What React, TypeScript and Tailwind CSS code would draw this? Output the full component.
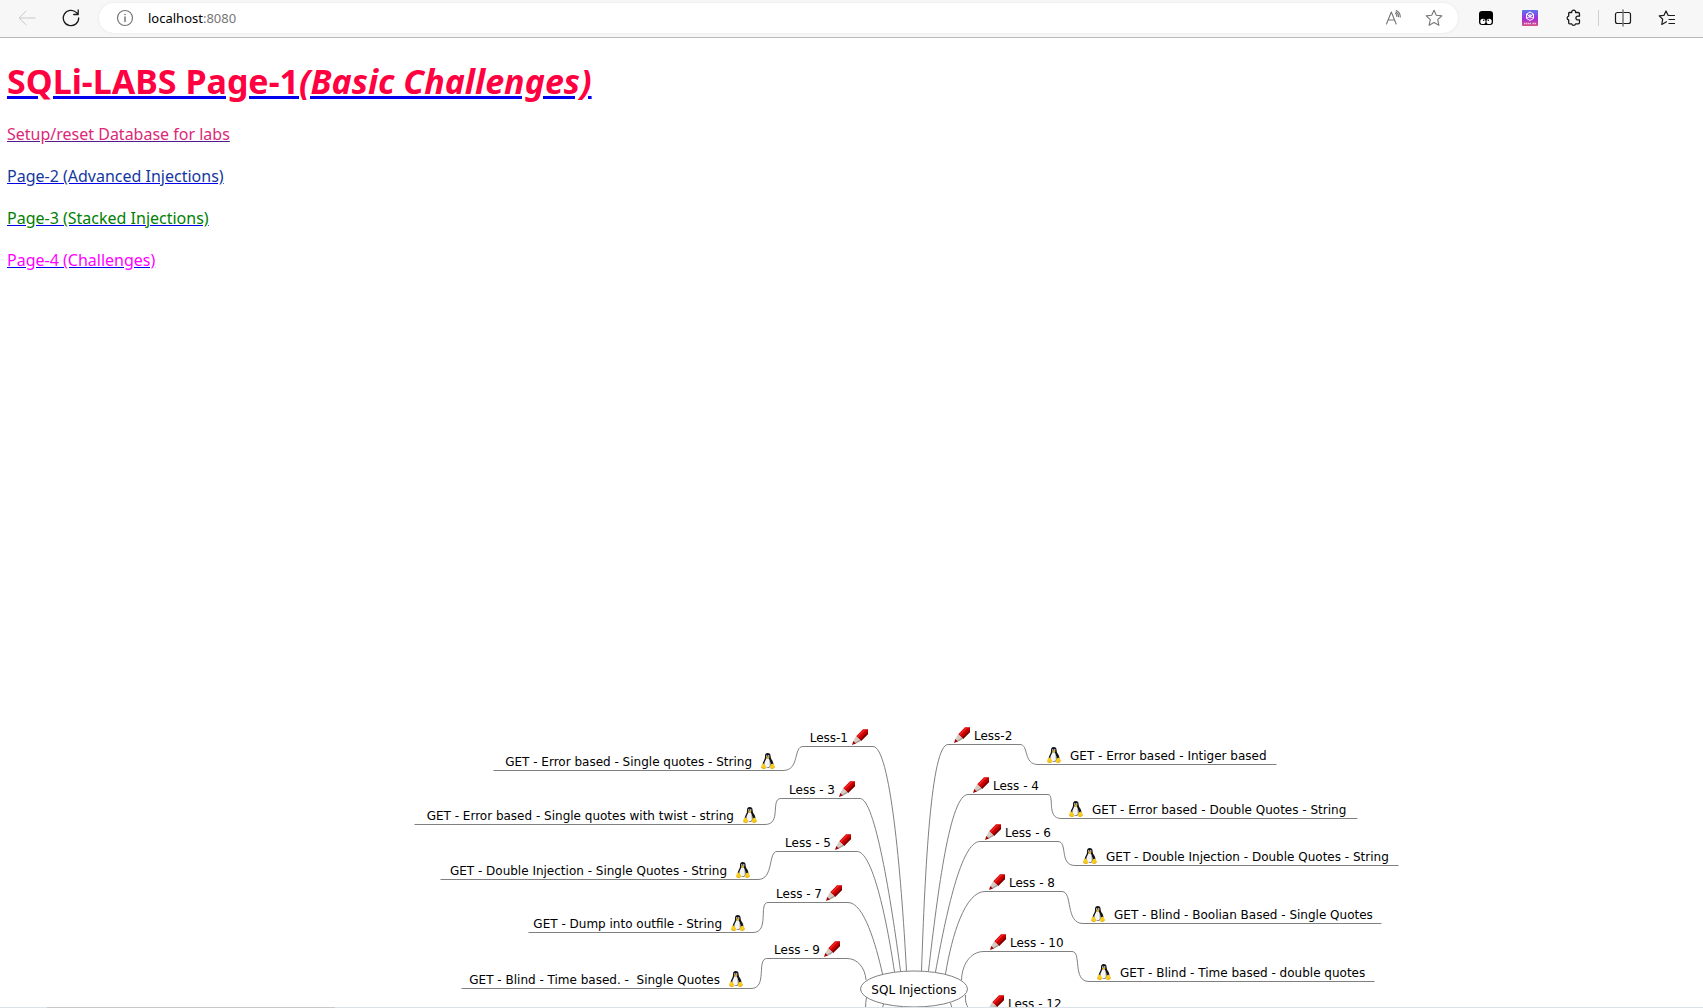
import React from "react";

const ORIGIN_X = 300;
const ORIGIN_Y = 708;

type Side = "left" | "right";

type Topic = {
  side: Side;
  icon: "pencil" | "tux";
  label: string;
  // Edge of the icon: its right edge on the left side, its left edge on the right side.
  x: number;
  // Height of the line under the topic.
  y: number;
};

const topics: Topic[] = [
  { side: "left", icon: "pencil", label: "Less-1", x: 868, y: 746 },
  { side: "left", icon: "tux", label: "GET - Error based - Single quotes - String", x: 776, y: 770 },
  { side: "left", icon: "pencil", label: "Less - 3", x: 855, y: 798 },
  { side: "left", icon: "tux", label: "GET - Error based - Single quotes with twist - string", x: 758, y: 824 },
  { side: "left", icon: "pencil", label: "Less - 5", x: 851, y: 851 },
  { side: "left", icon: "tux", label: "GET - Double Injection - Single Quotes - String", x: 751, y: 879 },
  { side: "left", icon: "pencil", label: "Less - 7", x: 842, y: 902 },
  { side: "left", icon: "tux", label: "GET - Dump into outfile - String", x: 746, y: 932 },
  { side: "left", icon: "pencil", label: "Less - 9", x: 840, y: 958 },
  { side: "left", icon: "tux", label: "GET - Blind - Time based. -  Single Quotes", x: 744, y: 988 },
  { side: "right", icon: "pencil", label: "Less-2", x: 954, y: 744 },
  { side: "right", icon: "tux", label: "GET - Error based - Intiger based", x: 1046, y: 764 },
  { side: "right", icon: "pencil", label: "Less - 4", x: 973, y: 794 },
  { side: "right", icon: "tux", label: "GET - Error based - Double Quotes - String", x: 1068, y: 818 },
  { side: "right", icon: "pencil", label: "Less - 6", x: 985, y: 841 },
  { side: "right", icon: "tux", label: "GET - Double Injection - Double Quotes - String", x: 1082, y: 865 },
  { side: "right", icon: "pencil", label: "Less - 8", x: 989, y: 891 },
  { side: "right", icon: "tux", label: "GET - Blind - Boolian Based - Single Quotes", x: 1090, y: 923 },
  { side: "right", icon: "pencil", label: "Less - 10", x: 990, y: 951 },
  { side: "right", icon: "tux", label: "GET - Blind - Time based - double quotes", x: 1096, y: 981 },
  { side: "right", icon: "pencil", label: "Less - 12", x: 988, y: 1012 },
];

const branches = [
  "M493.5 770.5H783C800 770.5 793 746.5 803 746.5H873C890 746.5 901 870 906.5 971",
  "M414.5 824.5H765C782 824.5 770 798.5 781 798.5H860C875 798.5 891 900 900.5 971",
  "M440.5 879.5H758C774 879.5 768 851.5 777 851.5H857C872 851.5 886 915 894.5 972",
  "M528.5 932.5H753C770 932.5 758 902.5 768 902.5H848C864 902.5 876 945 882.5 974",
  "M461.5 988.5H751C768 988.5 756 958.5 767 958.5H847C857 958.5 865 967 866 980",
  "M1276.5 764.5H1038C1023 764.5 1029 744.5 1020 744.5H948C931 744.5 925 870 921.5 971",
  "M1357.5 818.5H1061C1046 818.5 1055 794.5 1048 794.5H968C950 794.5 938 890 928.5 971",
  "M1398.5 865.5H1075C1059 865.5 1068 841.5 1058 841.5H980C961 841.5 946 915 935.5 972",
  "M1381.5 923.5H1083C1065 923.5 1073 891.5 1062 891.5H985C965 891.5 952 935 945.5 974",
  "M1374.5 981.5H1089C1072 981.5 1082 951.5 1072 951.5H984C970 951.5 962 965 961.5 980",
  "M866.5 997C866 1001 865.5 1004 865.5 1008",
  "M883.5 1004L882.5 1008",
  "M965.5 995C965 1000 966 1005 968.5 1008",
  "M950.5 1003L952 1008",
];

function Pencil() {
  return (
    <svg width="16" height="16" viewBox="0 0 16 16" className="shrink-0" aria-hidden="true">
      <path d="M11 0.300H16V5L9 12 4 7.500Z" fill="#cc0000" />
      <path d="M11 1 13.500 1 6.500 8.200 5 7.200Z" fill="#ee2222" />
      <path d="M16 2.500V5L9 12 7.800 10.800Z" fill="#7a0000" />
      <path d="M4.200 7 9 11.800 3 15 0.800 13Z" fill="#d6cbc2" />
      <path d="M8 10.800 9 11.800 3 15 2.200 14.200Z" fill="#a39a94" />
      <path d="M1.300 12 3.800 14.400 0 16Z" fill="#a40000" />
    </svg>
  );
}

function Tux() {
  return (
    <svg width="16" height="16" viewBox="0 0 16 16" className="shrink-0" aria-hidden="true">
      <path d="M7.700 0C5.700 0 4.900 1.400 5 3.200c.1 2-.3 3-1.300 4.700C2.700 9.600 2.500 11 2.900 12.500L8 15l5.200-2.500c.5-1.500.1-3.200-.9-4.900-.9-1.500-1.700-2.500-1.700-4.500C10.600 1.200 9.700 0 7.700 0Z" fill="#141414" />
      <path d="M6.300 5.300C6.200 7 4.300 8.500 4.300 11c0 2 1.400 3.600 3.300 3.600S10.400 13 10.400 11c0-2.500-1.300-4-1.600-5.800Z" fill="#f4f4f4" />
      <path d="M8.900 6c.8 1.500 1.700 3 1.500 5.500l-.7 2Z" fill="#bdbdbd" />
      <circle cx="6.800" cy="3" r=".8" fill="#fff" />
      <circle cx="8.700" cy="3" r=".8" fill="#fff" />
      <path d="M6 4.400 7.600 3.600l1.900.8L7.700 5.700Z" fill="#f0b90c" />
      <path d="M3 10.600c1-.1 1.700 1 2.400 2 .8 1.200 1.200 2.600 0 3.200-1.200.4-4.200-.6-4.300-1.400-.1-.8.200-1.100.5-2 .2-.9.500-1.700 1.400-1.800Z" fill="#f8cb20" />
      <path d="M12.600 10.800c.9 0 1.200.7 1.500 1.400.3.600.9.900.9 1.500 0 1-2.300 2.100-3.500 2.200-1.300 0-1.700-1.100-1.500-2.500.2-1.500 1.100-2.600 2.600-2.600Z" fill="#f8cb20" />
      <path d="M1.300 14.600c1 .7 2.500 1.100 3.800 1.100M14.700 14.300c-.9.800-2 1.300-3.200 1.400" stroke="#c68a05" strokeWidth=".5" fill="none" />
    </svg>
  );
}

function TopicLink({ topic }: { topic: Topic }) {
  const top = topic.y - 17 - ORIGIN_Y;
  const glyph = topic.icon === "pencil" ? <Pencil /> : <Tux />;
  const onLeft = topic.side === "left";
  const gap = topic.icon === "pencil" ? "gap-1" : "gap-2";
  const style = onLeft
    ? { top, right: 1403 - topic.x }
    : { top, left: topic.x - ORIGIN_X };
  return (
    <a href="#" style={style} className={`absolute flex items-start whitespace-pre text-[12px] leading-[18px] text-black ${gap}`}>
      {!onLeft && glyph}
      <span>{topic.label}</span>
      {onLeft && glyph}
    </a>
  );
}

function MindMap() {
  return (
    <nav aria-label="Lessons" className="relative mx-auto h-[299px] w-[1103px] max-w-none shrink-0 overflow-hidden font-['DejaVu_Sans',sans-serif]">
      <svg width="1103" height="300" viewBox={`${ORIGIN_X} ${ORIGIN_Y} 1103 300`} className="absolute top-0 left-0 max-w-none" fill="none" stroke="#808080" aria-hidden="true">
        {branches.map((d) => (
          <path key={d} d={d} />
        ))}
        <ellipse cx="914" cy="989" rx="53.500" ry="18" fill="#fff" />
      </svg>
      {topics.map((t) => (
        <TopicLink key={t.label} topic={t} />
      ))}
      <a href="#" className="absolute top-[273px] left-[560px] flex w-[108px] items-center justify-center text-[12px] leading-[18px] whitespace-nowrap text-black">
        SQL Injections
      </a>
    </nav>
  );
}

function ToolButton({ label, className = "", children }: { label: string; className?: string; children: React.ReactNode }) {
  return (
    <button type="button" aria-label={label} className={`flex size-5 shrink-0 items-center justify-center ${className}`}>
      {children}
    </button>
  );
}

function Toolbar() {
  const line = { fill: "none", stroke: "currentColor", strokeLinecap: "round", strokeLinejoin: "round" } as const;
  return (
    <header className="flex h-[38px] shrink-0 items-center border-b border-[#b9b9b9] bg-[#f7f7f7] pr-[26px] pb-px pl-[17px] font-['Noto_Sans',sans-serif]">
      <ToolButton label="Back" className="text-[#c8c8c8]">
        <svg width="18" height="16" viewBox="0 0 18 16" {...line}>
          <path d="M17 8H1.500M8 1.200 1.200 8 8 14.800" />
        </svg>
      </ToolButton>
      <ToolButton label="Refresh" className="ml-6 text-[#1b1b1b]">
        <svg width="18" height="18" viewBox="0 0 18 18" {...line} strokeWidth="1.300">
          <path d="M16.700 9A7.700 7.700 0 1 1 14.500 3.600L16 5.200M16.200 1v4.500h-4.500" />
        </svg>
      </ToolButton>
      <div className="ml-[18px] flex h-[30px] min-w-0 flex-1 items-center rounded-full bg-white pr-[14px] pl-4 shadow-[0_0_3px_rgba(0,0,0,0.08)]">
        <ToolButton label="View site information" className="text-[#767676]">
          <svg width="18" height="18" viewBox="0 0 18 18" {...line}>
            <circle cx="9" cy="9" r="7.500" strokeWidth="1.200" />
            <path d="M9 8v4.500" strokeWidth="1.500" />
            <circle cx="9" cy="5.500" r=".8" fill="currentColor" stroke="none" />
          </svg>
        </ToolButton>
        <label className="ml-[13px] flex flex-1 items-center text-[13px] leading-5">
          <input type="text" aria-label="Address" defaultValue="localhost" className="field-sizing-content bg-transparent p-0 text-black outline-none" />
          <span className="text-[#767676]">:8080</span>
        </label>
        <ToolButton label="Read aloud" className="text-[#767676]">
          <svg width="18" height="18" viewBox="0 0 18 18" {...line} strokeWidth="1.100">
            <path d="M1.500 15 6.300 3l4.900 12M3.200 11h6.300M10.600 4.300c.9.900 1.300 1.900 1.300 3.200M11.300 1.500c2.500 1.200 4 3.500 4 6.500M10.900 3c1.700 1 2.700 2.600 2.700 4.800" />
          </svg>
        </ToolButton>
        <ToolButton label="Add to favorites" className="ml-5 text-[#767676]">
          <svg width="18" height="18" viewBox="0 0 18 18" {...line} strokeWidth="1.100">
            <path d="M9 1.200 11.300 6.300 16.800 6.900 12.700 10.700 13.900 16.300 9 13.500 4.100 16.300 5.300 10.700 1.200 6.900 6.700 6.300Z" />
          </svg>
        </ToolButton>
      </div>
      <ToolButton label="Reader extension" className="ml-[18px]">
        <svg width="16" height="16" viewBox="0 0 16 16">
          <rect x="1" y="1" width="14" height="14" rx="3" fill="#000" />
          <circle cx="4.900" cy="11.400" r="2.600" fill="#fff" />
          <circle cx="11.100" cy="11.400" r="2.600" fill="#fff" />
          <circle cx="5.700" cy="10.300" r=".8" fill="#000" />
          <circle cx="10.300" cy="10.300" r=".8" fill="#000" />
        </svg>
      </ToolButton>
      <ToolButton label="Chat extension" className="ml-6">
        <svg width="16" height="16" viewBox="0 0 16 16">
          <defs>
            <linearGradient id="chat" x1="0" y1="0" x2="0" y2="1">
              <stop offset="0" stopColor="#5b76ee" />
              <stop offset=".55" stopColor="#a22bdd" />
              <stop offset="1" stopColor="#d6507c" />
            </linearGradient>
          </defs>
          <rect width="16" height="16" rx="1" fill="url(#chat)" />
          <path d="M8 2 11.500 4v4.500L8 10.500 4.500 8.500V4ZM8 4v4.500M5 4.500l3 1.800 3-1.800M5 8l3-1.700L11 8" fill="none" stroke="#fff" />
          <path d="M2 13.500h7M10.500 13.500H14" stroke="#f5c6e4" strokeWidth="1.500" strokeDasharray="1.500 .5" />
        </svg>
      </ToolButton>
      <ToolButton label="Extensions" className="ml-6 text-[#1b1b1b]">
        <svg width="18" height="18" viewBox="0 0 18 18" {...line} strokeWidth="1.300">
          <path d="M4.500 3.500h2.200a2 2 0 1 1 3.900 0h2.600c.8 0 1.300.5 1.300 1.300v2.400h-1.300a1.900 1.900 0 1 0 0 3.700h1.300v2.600c0 .8-.5 1.300-1.300 1.300h-2.600a2 2 0 0 1-3.900 0H4.500c-.5 0-.8-.3-.8-.8v-3a2 2 0 0 1 0-3.900V4.300c0-.5.300-.8.800-.8Z" />
        </svg>
      </ToolButton>
      <div className="ml-[14px] h-4 w-px bg-[#cfcfcf]" />
      <ToolButton label="Split screen" className="ml-[14px] text-[#1b1b1b]">
        <svg width="18" height="18" viewBox="0 0 18 18" {...line}>
          <path d="M9 3.500H3.500c-1.200 0-2 .8-2 2v7c0 1.200.8 2 2 2H9M9 3.500h5.500c1.200 0 2 .8 2 2v7c0 1.200-.8 2-2 2H9" strokeWidth="1.200" />
          <path d="M9 1v16" stroke="#777" strokeWidth="1.500" />
        </svg>
      </ToolButton>
      <ToolButton label="Favorites" className="ml-6 text-[#1b1b1b]">
        <svg width="18" height="18" viewBox="0 0 18 18" {...line} strokeWidth="1.200">
          <path d="M16.500 6.500H10.200L8 2 5.900 6.400 1.200 6.900 4.700 10.200 3.800 15.500 8.500 12.800M11 10.500H16.500M11 14.500H16.500" />
        </svg>
      </ToolButton>
    </header>
  );
}

export default function App() {
  return (
    <div className="flex min-h-screen flex-col overflow-hidden bg-white">
      <Toolbar />
      <main className="flex flex-1 flex-col font-['Noto_Sans',sans-serif]">
        <div className="px-[7px] pt-5">
          <h1 className="text-[34px] leading-[46px] font-bold whitespace-nowrap">
            <a href="#" className="text-[#0000ee] underline">
              <span className="text-[#ff0040]">
                SQLi-LABS Page-1<em>(Basic Challenges)</em>
              </span>
            </a>
          </h1>
          <ul className="mt-[18px] flex flex-col items-start gap-[18px] text-[16px] leading-6">
            <li>
              <a href="#" className="text-[#551a8b] underline"><span className="text-[#dc2878]">Setup/reset Database for labs</span></a>
            </li>
            <li>
              <a href="#" className="text-[#0000ee] underline"><span className="text-[#1437a0]">Page-2 (Advanced Injections)</span></a>
            </li>
            <li>
              <a href="#" className="text-[#0000ee] underline"><span className="text-[#008000]">Page-3 (Stacked Injections)</span></a>
            </li>
            <li>
              <a href="#" className="text-[#0000ee] underline"><span className="text-[#ff00ff]">Page-4 (Challenges)</span></a>
            </li>
          </ul>
        </div>
        <div className="mt-auto flex">
          <MindMap />
        </div>
      </main>
      <footer className="h-px bg-[#d9e2e8] pl-[47px]">
        <div className="h-px w-72 bg-[#c8c8c8]" />
      </footer>
    </div>
  );
}
